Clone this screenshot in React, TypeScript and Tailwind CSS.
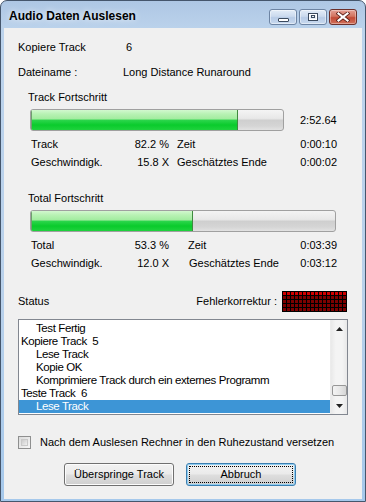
import type { ReactNode } from "react";

const LED_ROWS = 5;
const LED_COLS = 16;

const statusLines: { text: string; indent: boolean; selected?: boolean }[] = [
  { text: "Test Fertig", indent: true },
  { text: "Kopiere Track  5", indent: false },
  { text: "Lese Track", indent: true },
  { text: "Kopie OK", indent: true },
  { text: "Komprimiere Track durch ein externes Programm", indent: true },
  { text: "Teste Track  6", indent: false },
  { text: "Lese Track", indent: true, selected: true },
];

function ProgressBar({ className, percent }: { className: string; percent: number }) {
  return (
    <div
      className={`h-[22px] overflow-hidden rounded-[3px] border border-[#a0a0a0] bg-[linear-gradient(to_bottom,#f4f4f4_0%,#e8e8e8_42%,#cfcfcf_52%,#d5d5d5_80%,#e2e2e2_100%)] ${className}`}
    >
      <div
        className="h-full border-r border-[#3f8a3f] bg-[linear-gradient(to_bottom,#d2f8cf_0%,#b8f2b4_20%,#a3eca0_44%,#2ad54a_52%,#0acb2c_75%,#1fd23d_100%)] shadow-[inset_1px_0_0_#6f9f6f]"
        style={{ width: `${percent}%` }}
      />
    </div>
  );
}

function StatRow({
  label,
  value,
  label2,
  value2,
  gapClass,
  className,
}: {
  label: string;
  value: string;
  label2: string;
  value2: string;
  gapClass: string;
  className: string;
}) {
  return (
    <div className={`ml-[27px] flex h-[13px] w-[306px] leading-[13px] ${className}`}>
      <div className="flex w-[138px] justify-between">
        <span>{label}</span>
        <span>{value}</span>
      </div>
      <span className={gapClass}>{label2}</span>
      <span className="ml-auto">{value2}</span>
    </div>
  );
}

function Led() {
  const cells: ReactNode[] = [];
  for (let r = 0; r < LED_ROWS; r++) {
    for (let c = 0; c < LED_COLS; c++) {
      cells.push(
        <div key={`${r}-${c}`} className={r === 0 ? "h-[3px] w-[3px] bg-[#d10000]" : "h-[3px] w-[3px] bg-[#7d0000]"} />
      );
    }
  }
  return <div className="grid grid-cols-[repeat(16,3px)] gap-px bg-black p-px">{cells}</div>;
}

function TitleButton({ kind }: { kind: "min" | "max" | "close" }) {
  if (kind === "close") {
    return (
      <div className="flex h-[16px] w-[28px] items-center justify-center rounded-[3px] border border-[#6b2f2a] bg-[linear-gradient(to_bottom,#e4a196_0%,#d2735f_45%,#c24a36_55%,#d0705a_100%)] shadow-[inset_0_0_0_1px_rgba(255,255,255,0.35)]">
        <svg width="14" height="10" viewBox="0 0 14 10">
          <path d="M2.5 1.5 L11.5 8.5 M11.5 1.5 L2.5 8.5" stroke="#5a1f18" strokeWidth="3.8" strokeLinecap="square" />
          <path d="M2.5 1.5 L11.5 8.5 M11.5 1.5 L2.5 8.5" stroke="#ffffff" strokeWidth="2.2" strokeLinecap="square" />
        </svg>
      </div>
    );
  }
  return (
    <div className="flex h-[16px] w-[28px] items-center justify-center rounded-[3px] border border-[#6d84a3] bg-[linear-gradient(to_bottom,#e3ecf7_0%,#cbdaee_45%,#b7cbe6_55%,#c9daef_100%)] shadow-[inset_0_0_0_1px_rgba(255,255,255,0.45)]">
      {kind === "min" ? (
        <div className="mt-[5px] h-[4px] w-[11px] rounded-[1px] border border-[#3b4a5e] bg-white" />
      ) : (
        <div className="h-[8px] w-[10px] border border-[#3b4a5e] bg-[#e8eef6] shadow-[inset_0_0_0_1px_#ffffff]">
          <div className="mx-auto mt-[1px] h-[3px] w-[4px] border border-[#3b4a5e]" />
        </div>
      )}
    </div>
  );
}

function Arrow({ up }: { up: boolean }) {
  return (
    <svg width="7" height="4" viewBox="0 0 7 4">
      <path d={up ? "M0 4 L3.5 0 L7 4 Z" : "M0 0 L3.5 4 L7 0 Z"} fill="#222" />
    </svg>
  );
}

function WinButton({ children, focused }: { children: ReactNode; focused?: boolean }) {
  return (
    <div
      className={`flex h-[23px] w-[110px] items-center justify-center rounded-[3px] border bg-[linear-gradient(to_bottom,#f2f2f2_0%,#ebebeb_45%,#dddddd_55%,#cfcfcf_100%)] ${
        focused ? "border-[#3c7fb1] shadow-[inset_0_0_0_1px_#8fcdf1]" : "border-[#707070] shadow-[inset_0_0_0_1px_#fcfcfc]"
      }`}
    >
      {focused ? (
        <div className="flex h-[17px] w-[104px] items-center justify-center border border-dotted border-black">
          {children}
        </div>
      ) : (
        children
      )}
    </div>
  );
}

export default function App() {
  return (
    <div className="h-[502px] w-[366px] font-['Liberation_Sans',Arial,sans-serif] text-[11px] text-black">
      <div className="flex h-full w-full flex-col rounded-t-[7px] border border-[#45566c] bg-[linear-gradient(to_bottom,#aec7e4_0%,#bcd3ec_6%,#b9d1eb_60%,#a5c8eb_100%)] px-[3px] pb-[2px]">
        {/* title bar */}
        <div className="flex h-[27px] shrink-0 items-end pb-[2px] pl-[5px] pr-[5px]">
          <span className="mb-[3px] text-[12px] font-bold leading-[14px] text-black [text-shadow:0_0_6px_rgba(255,255,255,0.9)]">
            Audio Daten Auslesen
          </span>
          <div className="mb-px ml-auto flex gap-[2px]">
            <TitleButton kind="min" />
            <TitleButton kind="max" />
            <TitleButton kind="close" />
          </div>
        </div>

        {/* client area */}
        <div className="flex flex-1 flex-col bg-[#f0f0f0]">
          <div className="ml-[14px] mt-[13px] flex h-[13px] leading-[13px]">
            <span className="w-[108px]">Kopiere Track</span>
            <span>6</span>
          </div>
          <div className="ml-[14px] mt-[12px] flex h-[13px] leading-[13px]">
            <span className="w-[105px]">Dateiname :</span>
            <span>Long Distance Runaround</span>
          </div>

          <div className="ml-[24px] mt-[12px] h-[13px] leading-[13px]">Track Fortschritt</div>
          <div className="ml-[26px] mt-[5px] flex h-[22px] items-center">
            <ProgressBar className="w-[254px]" percent={82} />
            <span className="ml-[16px]">2:52.64</span>
          </div>
          <StatRow className="mt-[7px]" label="Track" value="82.2 %" label2="Zeit" value2="0:00:10" gapClass="ml-[8px]" />
          <StatRow
            className="mt-[5px]"
            label="Geschwindigk."
            value="15.8 X"
            label2="Geschätztes Ende"
            value2="0:00:02"
            gapClass="ml-[8px]"
          />

          <div className="ml-[24px] mt-[23px] h-[13px] leading-[13px]">Total Fortschritt</div>
          <div className="ml-[26px] mt-[5px] flex h-[22px]">
            <ProgressBar className="w-[306px]" percent={53.3} />
          </div>
          <StatRow className="mt-[7px]" label="Total" value="53.3 %" label2="Zeit" value2="0:03:39" gapClass="ml-[19px]" />
          <StatRow
            className="mt-[5px]"
            label="Geschwindigk."
            value="12.0 X"
            label2="Geschätztes Ende"
            value2="0:03:12"
            gapClass="ml-[20px]"
          />

          <div className="mr-[15px] mt-[20px] flex h-[22px] items-center">
            <span className="ml-[14px]">Status</span>
            <span className="ml-auto mr-[5px]">Fehlerkorrektur :</span>
            <Led />
          </div>

          {/* status list */}
          <div className="ml-[14px] mt-[7px] flex h-[96px] w-[330px] border border-[#828790] bg-white">
            <div className="flex-1 overflow-hidden pt-[2px]">
              {statusLines.map((line, i) => (
                <div
                  key={i}
                  className={`h-[13px] whitespace-pre text-[11.5px] leading-[13px] tracking-[-0.4px] ${
                    line.indent ? "pl-[17px]" : "pl-[2px]"
                  } ${line.selected ? "bg-[#3d95d6] text-white" : ""}`}
                >
                  {line.text}
                </div>
              ))}
            </div>
            <div className="flex w-[17px] flex-col border-l border-[#ececec] bg-[linear-gradient(to_right,#e9e9e9,#f4f4f4_30%,#f4f4f4_70%,#e8e8e8)]">
              <div className="flex h-[17px] items-center justify-center">
                <Arrow up />
              </div>
              <div className="flex-1">
                <div className="mx-auto mt-[48px] h-[11px] w-[15px] rounded-[2px] border border-[#979797] bg-[linear-gradient(to_right,#f3f3f3,#e8e8e8_50%,#d6d6d6)]" />
              </div>
              <div className="flex h-[17px] items-center justify-center">
                <Arrow up={false} />
              </div>
            </div>
          </div>

          <div className="ml-[14px] mt-[21px] flex h-[13px] items-center leading-[13px]">
            <div className="h-[13px] w-[13px] border border-[#8e8f8f] bg-[linear-gradient(135deg,#dcdcdc,#f6f6f6)] p-[2px]">
              <div className="h-full w-full border border-[#c9c9c9] bg-[linear-gradient(135deg,#cbcbcb,#f0f0f0)]" />
            </div>
            <span className="ml-[9px]">Nach dem Auslesen Rechner in den Ruhezustand versetzen</span>
          </div>

          <div className="ml-[60px] mt-[14px] flex gap-[12px]">
            <WinButton>Überspringe Track</WinButton>
            <WinButton focused>Abbruch</WinButton>
          </div>
        </div>
      </div>
    </div>
  );
}
